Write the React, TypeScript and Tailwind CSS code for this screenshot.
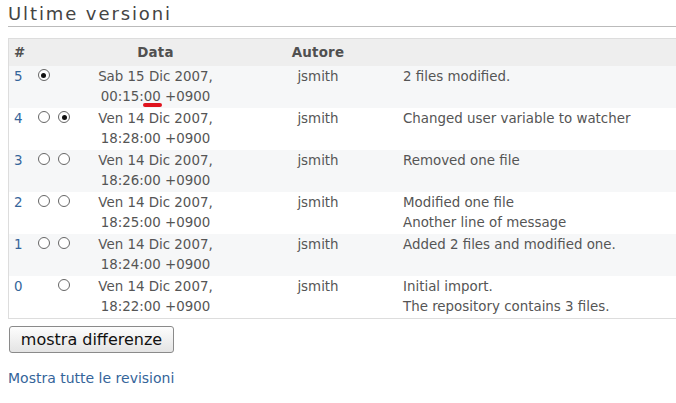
import React from "react";

type Rev = {
  id: string;
  from: boolean | null; // null = no radio
  to: boolean | null;
  date: [string, string];
  author: string;
  comments: string[];
};

const revisions: Rev[] = [
  { id: "5", from: true, to: null, date: ["Sab 15 Dic 2007,", "00:15:00 +0900"], author: "jsmith", comments: ["2 files modified."] },
  { id: "4", from: false, to: true, date: ["Ven 14 Dic 2007,", "18:28:00 +0900"], author: "jsmith", comments: ["Changed user variable to watcher"] },
  { id: "3", from: false, to: false, date: ["Ven 14 Dic 2007,", "18:26:00 +0900"], author: "jsmith", comments: ["Removed one file"] },
  { id: "2", from: false, to: false, date: ["Ven 14 Dic 2007,", "18:25:00 +0900"], author: "jsmith", comments: ["Modified one file", "Another line of message"] },
  { id: "1", from: false, to: false, date: ["Ven 14 Dic 2007,", "18:24:00 +0900"], author: "jsmith", comments: ["Added 2 files and modified one."] },
  { id: "0", from: null, to: false, date: ["Ven 14 Dic 2007,", "18:22:00 +0900"], author: "jsmith", comments: ["Initial import.", "The repository contains 3 files."] },
];

// old-style gtk radio, the native one renders blue
function Radio({ checked }: { checked: boolean }) {
  return (
    <span className="mt-[2px] flex h-[12px] w-[12px] items-center justify-center rounded-full border border-[#666] bg-white">
      {checked && <span className="h-[5px] w-[5px] rounded-full bg-[#111]" />}
    </span>
  );
}

const cols = "grid grid-cols-[24px_21px_21px_161px_164px_1fr]";

export default function App() {
  return (
    <div className="relative min-h-[403px] w-[676px] overflow-hidden bg-white pl-2 font-['DejaVu_Sans',sans-serif] text-[#555]">
      <h2 className="border-b border-[#bbbbbb] pt-[4px] pb-[2px] text-[18px] leading-[20px] tracking-[1.9px] text-[#444]">
        Ultime versioni
      </h2>

      <div className="mt-[11px] border-y border-l border-[#dddddd] text-[13.4px] leading-[20px]">
        {/* header */}
        <div className={`${cols} h-[27px] items-center bg-[#eeeeee] font-bold text-[#505050]`}>
          <div className="pl-[5px]">#</div>
          <div />
          <div />
          <div className="text-center tracking-[0.2px]">Data</div>
          <div className="text-center tracking-[0.2px]">Autore</div>
          <div />
        </div>

        {revisions.map((r, i) => (
          <div
            key={r.id}
            className={`${cols} h-[42px] py-[1px] ${i % 2 === 0 ? "bg-[#f6f7f8]" : "bg-white"}`}
          >
            <div className="pl-[5px] text-[#35659a]">{r.id}</div>
            <div className="flex justify-center">
              {r.from !== null && <Radio checked={r.from} />}
            </div>
            <div className="flex justify-center pr-[1px]">
              {r.to !== null && <Radio checked={r.to} />}
            </div>
            <div className="text-center">
              <div>{r.date[0]}</div>
              <div>{r.date[1]}</div>
            </div>
            <div className="text-center">{r.author}</div>
            <div className="pl-[3px]">
              {r.comments.map((c) => (
                <div key={c}>{c}</div>
              ))}
            </div>
          </div>
        ))}
      </div>

      <button className="mt-[7px] ml-[1px] h-[27px] w-[165px] rounded-[3px] border border-[#8a8a8a] bg-gradient-to-b from-[#fdfdfd] to-[#e4e4e4] text-[16px] leading-[20px] text-[#111]">
        mostra differenze
      </button>

      <div className="mt-[13px]">
        <a href="#" className="text-[14px] leading-[20px] text-[#35659a]">
          Mostra tutte le revisioni
        </a>
      </div>

      {/* red mark under the seconds */}
      <span className="absolute top-[103px] left-[143px] h-[4px] w-[19px] rounded-full bg-[#e0141e]" />
    </div>
  );
}
